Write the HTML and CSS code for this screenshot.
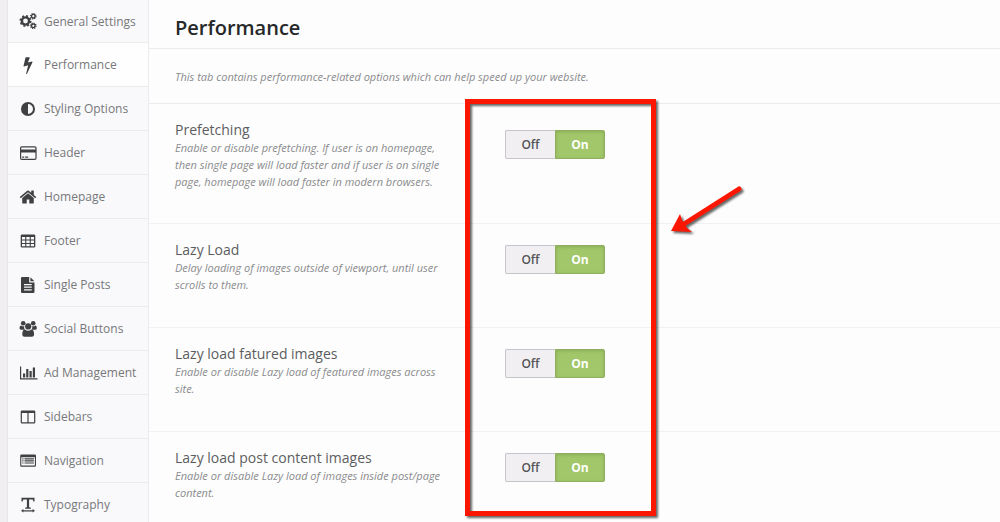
FILE: index.html
```html
<!DOCTYPE html>
<html lang="en">
<head>
    <meta charset="UTF-8">
    <meta name="viewport" content="width=device-width, initial-scale=1.0">
    <title>Theme Options - Performance</title>
    <link rel="stylesheet" href="styles.css">
</head>
<body>
    <div class="panel">
        <!-- Sidebar -->
        <nav class="sidebar">
            <a href="#general">
                <svg viewBox="0 0 18 18"><circle cx="6.5" cy="9" r="3.6" fill="none" stroke="currentColor" stroke-width="2.4"/><circle cx="6.5" cy="9" r="5.2" fill="none" stroke="currentColor" stroke-width="1.6" stroke-dasharray="2 2.08"/><circle cx="14.3" cy="4.2" r="1.8" fill="none" stroke="currentColor" stroke-width="1.4"/><circle cx="14.3" cy="4.2" r="2.7" fill="none" stroke="currentColor" stroke-width="1.2" stroke-dasharray="1.1 1.02"/><circle cx="14.3" cy="13.8" r="1.8" fill="none" stroke="currentColor" stroke-width="1.4"/><circle cx="14.3" cy="13.8" r="2.7" fill="none" stroke="currentColor" stroke-width="1.2" stroke-dasharray="1.1 1.02"/></svg>
                General Settings
            </a>
            <a href="#performance" class="active">
                <svg viewBox="0 0 1792 1792"><path d="M1333 566q18 20 7 44l-540 1157q-13 25-42 25-4 0-14-2-17-5-25.500-19t-4.500-30l197-808-406 101q-4 1-12 1-18 0-31-11-18-15-13-39l201-825q4-14 16-23t28-9h328q19 0 32 12.500t13 29.500q0 8-5 18l-171 463 396-98q8-2 12-2 19 0 34 15z"/></svg>
                Performance
            </a>
            <a href="#styling">
                <svg viewBox="0 0 18 18"><circle cx="9" cy="9" r="6" fill="none" stroke="currentColor" stroke-width="2"/><path d="M9 3a6 6 0 0 1 0 12z" transform="rotate(180 9 9)"/></svg>
                Styling Options
            </a>
            <a href="#header">
                <svg viewBox="0 0 18 18"><rect x="1.600" y="2.800" width="15.400" height="12.600" rx="1.200" fill="none" stroke="currentColor" stroke-width="1.200"/><path d="M1.500 5.600h15.500v3h-15.500zM3.200 12.600h2v1.200h-2zM6.200 12.600h3v1.200h-3z"/></svg>
                Header
            </a>
            <a href="#homepage">
                <svg viewBox="0 0 1792 1792"><path d="M1472 992v480q0 26-19 45t-45 19h-384v-384h-256v384h-384q-26 0-45-19t-19-45v-480q0-1 .5-3t.5-3l575-474 575 474q1 2 1 6zm223-69l-62 74q-8 9-21 11h-3q-13 0-21-7l-692-577-692 577q-12 8-24 7-13-2-21-11l-62-74q-8-10-7-23.500t11-21.500l719-599q32-26 76-26t76 26l244 204v-195q0-14 9-23t23-9h192q14 0 23 9t9 23v408l219 182q10 8 11 21.500t-7 23.500z"/></svg>
                Homepage
            </a>
            <a href="#footer">
                <svg viewBox="0 0 18 18"><path d="M3 2.500h12a1.300 1.300 0 0 1 1.300 1.300v10.400a1.300 1.300 0 0 1-1.300 1.300H3a1.300 1.300 0 0 1-1.300-1.300V3.800A1.300 1.300 0 0 1 3 2.500zM3 5v2.400h3.200V5zm4.300 0v2.400h3.400V5zm4.500 0v2.400H15V5zM3 8.500v2.400h3.200V8.500zm4.300 0v2.400h3.400V8.500zm4.500 0v2.400H15V8.500zM3 12v2.300h3.200V12zm4.300 0v2.300h3.400V12zm4.500 0v2.300H15V12z" fill-rule="evenodd"/></svg>
                Footer
            </a>
            <a href="#posts">
                <svg viewBox="0 0 18 18"><path d="M3 1h7.200v5.500h5.300v9.500a1 1 0 0 1-1 1H3a1 1 0 0 1-1-1V2a1 1 0 0 1 1-1zM5 8v1.200h7.700V8zm0 2.600v1.200h7.700v-1.200zm0 2.600v1.200h7.700v-1.200zM11.400 1.200l4 4.100h-4z" fill-rule="evenodd"/></svg>
                Single Posts
            </a>
            <a href="#social">
                <svg viewBox="0 0 18 18"><circle cx="4.200" cy="3.300" r="2.300"/><circle cx="14.200" cy="3.300" r="2.300"/><path d="M.6 8.300c0-2 .8-3 1.700-2.600 1 .7 2 .8 3 .4-.4 1.300-.2 2.500.6 3.600H2C1 9.700.6 9.200.6 8.300zM17.800 8.300c0-2-.8-3-1.700-2.600-1 .7-2 .8-3 .4.4 1.300.2 2.500-.6 3.600h3.900c1 0 1.400-.5 1.400-1.400z"/><circle cx="9.200" cy="6.400" r="3.100"/><path d="M3.300 14.300c0-3 .9-4.700 2.700-4.700 2 1.600 4.400 1.600 6.400 0 1.800 0 2.700 1.700 2.700 4.700 0 1.700-.8 2.500-2.300 2.500H5.600c-1.500 0-2.300-.8-2.300-2.500z"/></svg>
                Social Buttons
            </a>
            <a href="#ads">
                <svg viewBox="0 0 18 18"><path d="M1 2.500h1.200v11.800h16.300v1.200H1zM4 9.500h2.200v4H4zM7.200 5h2.200v8.500H7.200zM10.500 7h2.200v6.500h-2.200zM13.800 3.600H16v9.900h-2.200z"/></svg>
                Ad Management
            </a>
            <a href="#sidebars">
                <svg viewBox="0 0 18 18"><path d="M3 2.500h12a1.300 1.300 0 0 1 1.300 1.300v10.400a1.300 1.300 0 0 1-1.300 1.300H3a1.300 1.300 0 0 1-1.300-1.300V3.800A1.300 1.300 0 0 1 3 2.500zM2.900 4.900v9.400h5.500V4.900zm6.700 0v9.400h5.500V4.900z" fill-rule="evenodd"/></svg>
                Sidebars
            </a>
            <a href="#navigation">
                <svg viewBox="0 0 18 18"><path d="M2.400 2.500h13.400a1.200 1.200 0 0 1 1.200 1.200v9.800a1.200 1.200 0 0 1-1.200 1.200H2.400a1.200 1.200 0 0 1-1.200-1.200V3.700a1.200 1.200 0 0 1 1.200-1.200zM2.300 5.300v8.300h13.600V5.300z" fill-rule="evenodd"/><path d="M3.300 6.200h1.200v1.200H3.300zM5.500 6.200h9.400v1.200H5.500zM3.300 8.300h1.200v1.200H3.300zM5.500 8.300h9.400v1.200H5.500zM3.300 10.400h1.200v1.200H3.300zM5.500 10.400h9.400v1.200H5.500z"/></svg>
                Navigation
            </a>
            <a href="#typography">
                <svg viewBox="0 0 18 18"><path d="M2.500 1.800h13v3.600h-1.100l-.7-1.900h-3.600v7.800l1.800.5v1H6.100v-1l1.800-.5V3.500H4.300l-.7 1.900H2.500zM2 14.800l2.400-1.700v1.100h9.200v-1.100l2.400 1.700-2.400 1.700v-1.100H4.400v1.100z"/></svg>
                Typography
            </a>
        </nav>

        <!-- Settings -->
        <main class="content">
            <h1>Performance</h1>
            <p class="intro">This tab contains performance-related options which can help speed up your website.</p>

            <section class="setting setting-first">
                <div class="setting-text">
                    <h2>Prefetching</h2>
                    <p>Enable or disable prefetching. If user is on homepage, then single page will load faster and if user is on single page, homepage will load faster in modern browsers.</p>
                </div>
                <div class="switch" role="group" aria-label="Prefetching">
                    <button type="button" aria-pressed="false">Off</button>
                    <button type="button" aria-pressed="true" class="on">On</button>
                </div>
            </section>

            <section class="setting">
                <div class="setting-text">
                    <h2>Lazy Load</h2>
                    <p>Delay loading of images outside of viewport, until user scrolls to them.</p>
                </div>
                <div class="switch" role="group" aria-label="Lazy Load">
                    <button type="button" aria-pressed="false">Off</button>
                    <button type="button" aria-pressed="true" class="on">On</button>
                </div>
            </section>

            <section class="setting">
                <div class="setting-text">
                    <h2>Lazy load fatured images</h2>
                    <p>Enable or disable Lazy load of featured images across site.</p>
                </div>
                <div class="switch" role="group" aria-label="Lazy load fatured images">
                    <button type="button" aria-pressed="false">Off</button>
                    <button type="button" aria-pressed="true" class="on">On</button>
                </div>
            </section>

            <section class="setting">
                <div class="setting-text">
                    <h2>Lazy load post content images</h2>
                    <p>Enable or disable Lazy load of images inside post/page content.</p>
                </div>
                <div class="switch" role="group" aria-label="Lazy load post content images">
                    <button type="button" aria-pressed="false">Off</button>
                    <button type="button" aria-pressed="true" class="on">On</button>
                </div>
            </section>

            <!-- Red marker over the switches -->
            <div class="marker"></div>
            <svg class="arrow" viewBox="0 0 80 56"><path d="M69 6L14 41" stroke="#fc1703" stroke-width="5" stroke-linecap="round"/><path d="M1 48L10 31L12.500 38L17 45L22 49Z" fill="#fc1703"/></svg>
        </main>
    </div>
</body>
</html>
```

FILE: styles.css
```css
* {
    margin: 0;
    padding: 0;
    box-sizing: border-box;
}

body {
    background: #f0eef1;
    font-family: "Open Sans", "Noto Sans", sans-serif;
}

.panel {
    display: flex;
    min-height: 100vh;
    margin-left: 7px;
    border-left: 1px solid #e6e5e8;
    background: #fdfdfd;
}

/* Sidebar */
.sidebar {
    width: 141px;
    flex-shrink: 0;
    background: #f9f9fb;
    border-right: 1px solid #ececee;
}

.sidebar a {
    display: flex;
    align-items: center;
    gap: 7px;
    height: 44px;
    padding-left: 11px;
    border-bottom: 1px solid #ececee;
    color: #77787a;
    font-size: 12px;
    text-decoration: none;
    white-space: nowrap;
}

.sidebar a:first-child {
    height: 43px;
}

.sidebar a.active {
    background: #fefefe;
}

.sidebar svg {
    width: 18px;
    height: 18px;
    color: #3f4042;
    fill: currentColor;
    overflow: visible;
}

/* Content */
.content {
    position: relative;
    flex: 1;
}

h1 {
    height: 49px;
    padding: 13px 26px 0;
    border-bottom: 1px solid #ececee;
    color: #262829;
    font-size: 20px;
    line-height: 30px;
    font-weight: 600;
}

.intro {
    padding: 19px 26px 18px;
    border-bottom: 1px solid #ececee;
}

.intro,
.setting p {
    color: #8a8b8d;
    font-size: 11px;
    line-height: 17px;
    font-style: italic;
}

.setting {
    display: flex;
    align-items: flex-start;
    padding: 16px 26px 34px;
    border-bottom: 1px solid #f1f1f2;
}

.setting-first {
    padding-bottom: 33px;
}

/* last row runs to the bottom of the panel */
.setting:last-of-type {
    padding-bottom: 0;
    border-bottom: none;
}

.setting-text {
    width: 275px;
    margin-right: 55px;
}

.setting h2 {
    color: #5c5d5f;
    font-size: 14px;
    line-height: 19px;
    font-weight: 400;
}

/* Switch */
.switch {
    display: flex;
    margin-top: 5px;
}

.setting-first .switch {
    margin-top: 10px;
}

.switch button {
    width: 50px;
    height: 29px;
    border: 1px solid #c6c6ca;
    border-right: none;
    border-radius: 2px 0 0 2px;
    background: #f1eff2;
    color: #555557;
    font-family: inherit;
    font-size: 12px;
    font-weight: 600;
    cursor: pointer;
}

.switch button.on {
    border: 1px solid #8fae60;
    border-radius: 0 2px 2px 0;
    background: #a2c76a;
    color: #fff;
    font-weight: 700;
    box-shadow: inset 0 1px 3px rgba(80, 110, 30, 0.3);
}

/* Marker */
.marker {
    position: absolute;
    top: 99px;
    left: 316px;
    width: 191px;
    height: 417px;
    border: 5px solid #fc1703;
    filter: drop-shadow(2px 2px 1px rgba(0, 0, 0, 0.6));
    pointer-events: none;
}

.arrow {
    position: absolute;
    top: 183px;
    left: 521px;
    width: 80px;
    height: 56px;
    filter: drop-shadow(2px 2px 1px rgba(0, 0, 0, 0.6));
    pointer-events: none;
}
```
